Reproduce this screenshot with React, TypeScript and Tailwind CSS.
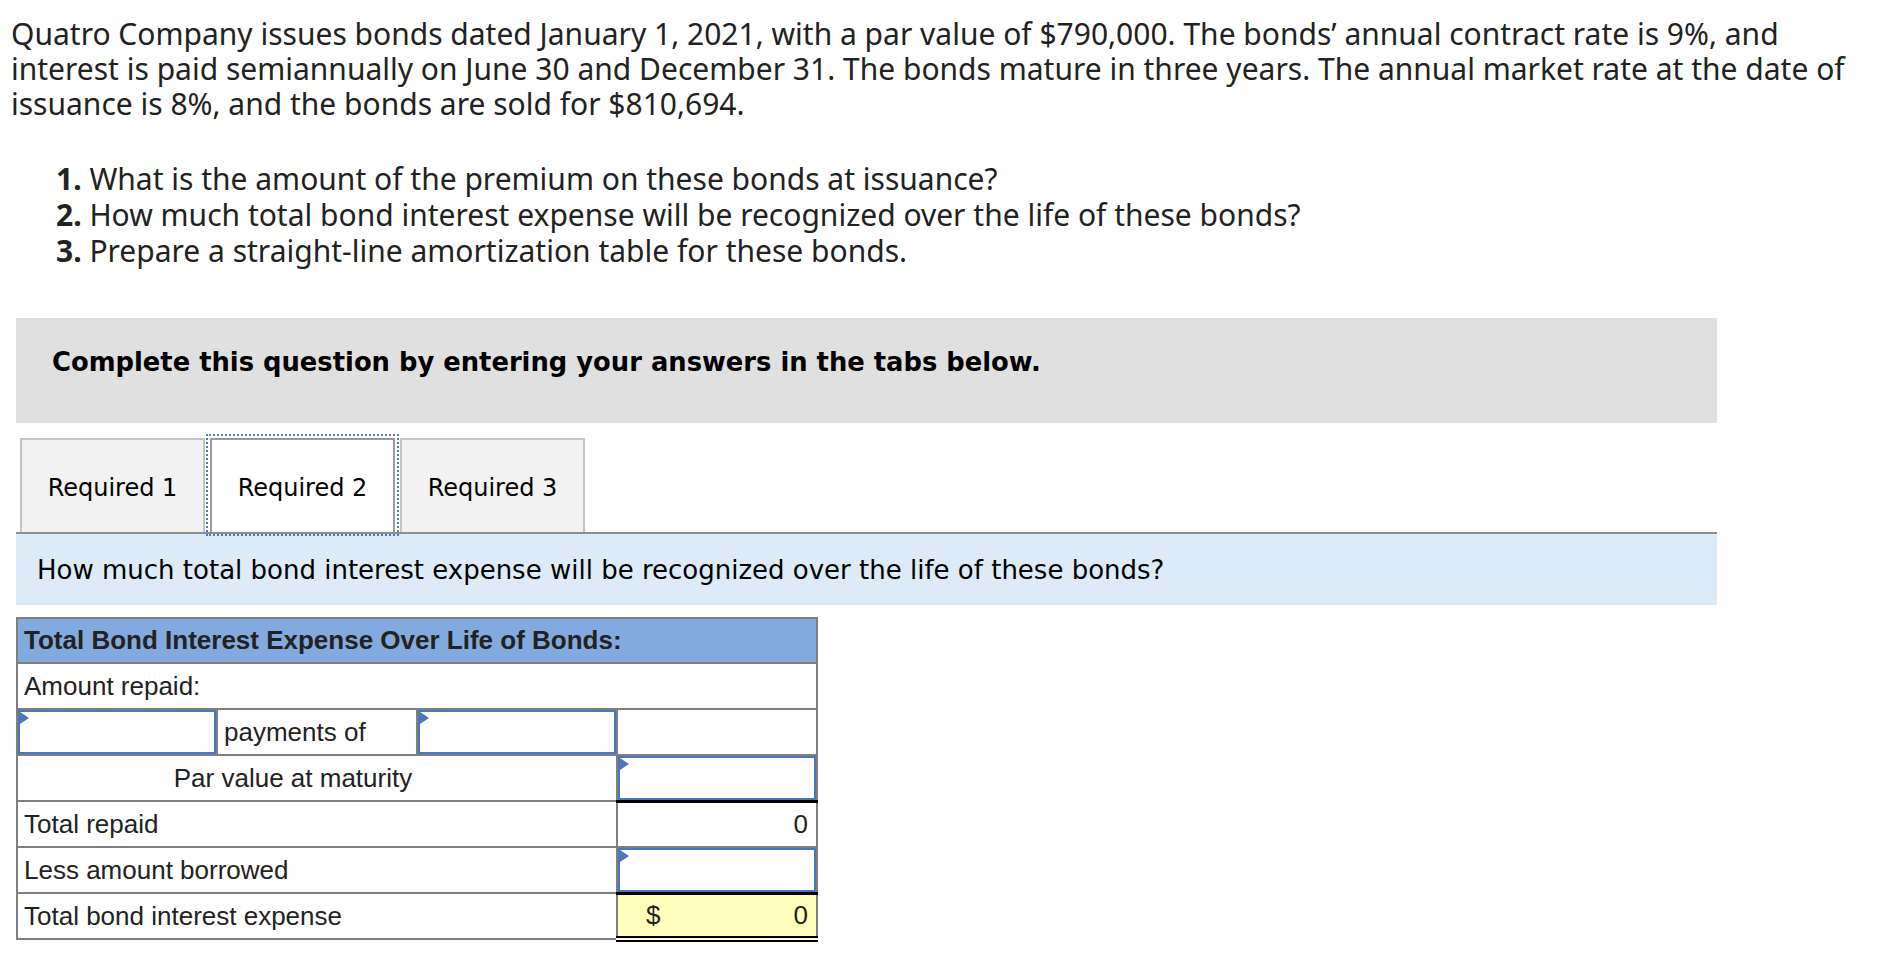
import React from "react";

function InputCell() {
  return (
    <div className="relative h-full w-full border-2 border-[#4a76bd] bg-white">
      <div className="absolute left-0 top-0 h-0 w-0 border-y-[6px] border-l-[9px] border-y-transparent border-l-[#4a76bd]" />
    </div>
  );
}

export default function App() {
  return (
    <div className="w-full bg-white text-[#222]">
      <div className="w-[1880px] pl-[11px] pr-[20px] pt-[16px] font-['Noto_Sans',sans-serif] text-[30px] leading-[35px]">
        Quatro Company issues bonds dated January 1, 2021, with a par value of $790,000. The bonds’ annual contract rate is 9%, and interest is paid semiannually on June 30 and December 31. The bonds mature in three years. The annual market rate at the date of issuance is 8%, and the bonds are sold for $810,694.
      </div>

      <div className="mt-[40px] pl-[56px] font-['Noto_Sans',sans-serif] text-[30px] leading-[36px]">
        <div>
          <span className="font-bold">1.</span> What is the amount of the premium on these bonds at issuance?
        </div>
        <div>
          <span className="font-bold">2.</span> How much total bond interest expense will be recognized over the life of these bonds?
        </div>
        <div>
          <span className="font-bold">3.</span> Prepare a straight-line amortization table for these bonds.
        </div>
      </div>

      <div className="ml-[16px] mt-[49px] h-[105px] w-[1701px] bg-[#e0e0e0] pl-[36px] pt-[29px] font-['DejaVu_Sans',sans-serif] text-[25.8px] font-bold leading-[30px] text-black">
        Complete this question by entering your answers in the tabs below.
      </div>

      <div className="ml-[16px] mt-[15px] flex w-[1701px] border-b-2 border-[#8e8e8e] pl-[4px] font-['DejaVu_Sans',sans-serif] text-[24px] text-black">
        <div className="flex h-[94px] w-[185px] items-center justify-center border-2 border-b-0 border-[#c4c4c4] bg-[#f2f2f2] pt-[4px]">
          Required 1
        </div>
        <div className="ml-[5px] flex h-[94px] w-[185px] items-center justify-center border-2 border-b-0 border-[#9a9a9a] bg-white pt-[4px] outline-2 outline-offset-[2px] outline-dotted outline-[#4a7bc4]">
          Required 2
        </div>
        <div className="ml-[5px] flex h-[94px] w-[185px] items-center justify-center border-2 border-b-0 border-[#c4c4c4] bg-[#f2f2f2] pt-[4px]">
          Required 3
        </div>
      </div>

      <div className="ml-[16px] flex h-[71px] w-[1701px] items-center bg-[#ddebf8] pl-[21px] pt-[2px] font-['DejaVu_Sans',sans-serif] text-[26px] text-black">
        How much total bond interest expense will be recognized over the life of these bonds?
      </div>

      <table className="ml-[16px] mt-[12px] w-[802px] table-fixed border-collapse border-2 border-[#7f7f7f] font-['Liberation_Sans',Arial,sans-serif] text-[26px] text-[#222]">
        <colgroup>
          <col className="w-[200px]" />
          <col className="w-[200px]" />
          <col className="w-[200px]" />
          <col className="w-[200px]" />
        </colgroup>
        <tbody>
          <tr className="h-[45px]">
            <td colSpan={4} className="border-2 border-[#7f7f7f] bg-[#83aadf] px-[6px] font-bold">
              Total Bond Interest Expense Over Life of Bonds:
            </td>
          </tr>
          <tr className="h-[46px]">
            <td colSpan={4} className="border-2 border-[#7f7f7f] px-[6px]">
              Amount repaid:
            </td>
          </tr>
          <tr className="h-[46px]">
            <td className="h-[46px] border-2 border-[#7f7f7f] p-0">
              <InputCell />
            </td>
            <td className="border-2 border-[#7f7f7f] px-[6px]">payments of</td>
            <td className="h-[46px] border-2 border-[#7f7f7f] p-0">
              <InputCell />
            </td>
            <td className="border-2 border-[#7f7f7f]"></td>
          </tr>
          <tr className="h-[46px]">
            <td colSpan={3} className="border-2 border-[#7f7f7f] pr-[48px] text-center">
              Par value at maturity
            </td>
            <td className="h-[46px] border-2 border-b-[3px] border-[#7f7f7f] border-b-black p-0">
              <InputCell />
            </td>
          </tr>
          <tr className="h-[46px]">
            <td colSpan={3} className="border-2 border-[#7f7f7f] px-[6px]">
              Total repaid
            </td>
            <td className="border-2 border-[#7f7f7f] pr-[8px] text-right">0</td>
          </tr>
          <tr className="h-[46px]">
            <td colSpan={3} className="border-2 border-[#7f7f7f] px-[6px]">
              Less amount borrowed
            </td>
            <td className="h-[46px] border-2 border-b-[3px] border-[#7f7f7f] border-b-black p-0">
              <InputCell />
            </td>
          </tr>
          <tr className="h-[46px]">
            <td colSpan={3} className="border-2 border-[#7f7f7f] px-[6px]">
              Total bond interest expense
            </td>
            <td className="border-2 border-b-[6px] border-double border-[#7f7f7f] border-b-black bg-[#ffffbb] pl-[28px] pr-[8px]">
              <div className="flex justify-between">
                <span>$</span>
                <span>0</span>
              </div>
            </td>
          </tr>
        </tbody>
      </table>
    </div>
  );
}
